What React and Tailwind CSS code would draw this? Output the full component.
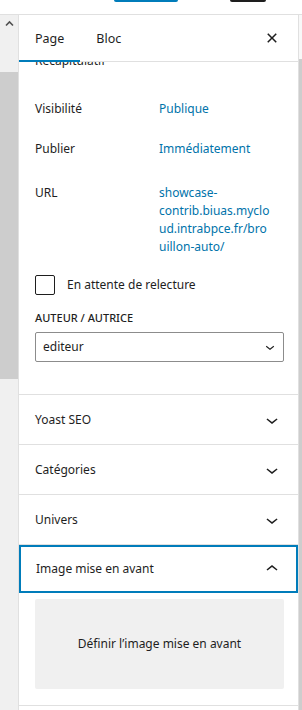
import React from "react";

const ChevronDown = ({ size = 24 }) => (
    <svg width={size} height={size} viewBox="0 0 24 24" fill="#1e1e1e">
        <path d="M17.5 11.6L12 16l-5.5-4.4.9-1.2L12 14l4.6-3.6 1 1.2z" />
    </svg>
);

const ChevronUp = ({ size = 24 }) => (
    <svg width={size} height={size} viewBox="0 0 24 24" fill="#1e1e1e">
        <path d="M6.5 12.4L12 8l5.5 4.4-.9 1.2L12 10l-4.5 3.6-1-1.2z" />
    </svg>
);

const CloseIcon = () => (
    <svg width="24" height="24" viewBox="0 0 24 24" fill="#1e1e1e">
        <path d="M12 13.06l3.712 3.713 1.061-1.06L13.061 12l3.712-3.712-1.06-1.06L12 10.938 8.288 7.227l-1.061 1.06L10.939 12l-3.712 3.712 1.06 1.061L12 13.061z" />
    </svg>
);

function Row({ label, children, className }) {
    return (
        <div className={"flex leading-[18px] " + className}>
            <div className="w-[124px] shrink-0">{label}</div>
            <div className="text-[#0073aa]">{children}</div>
        </div>
    );
}

function Panel({ title }) {
    return (
        <div className="h-[50px] flex items-center justify-between pl-4 pr-[14px] border-b border-[#e0e0e0]">
            <span>{title}</span>
            <ChevronDown />
        </div>
    );
}

export default function App() {
    return (
        <div className="w-[302px] h-[710px] overflow-hidden bg-white flex flex-col font-['Noto_Sans',sans-serif] text-[12px] text-[#1e1e1e]">
            {/* top toolbar edge */}
            <div className="h-[15px] shrink-0 flex items-start border-b border-[#e0e0e0]">
                <div className="ml-[114px] w-[64px] h-[2px] bg-[#007cba] rounded-b-[2px]"></div>
                <div className="ml-[52px] w-[36px] h-[2px] bg-[#1e1e1e] rounded-b-[2px]"></div>
            </div>

            <div className="flex flex-1 min-h-0">
                {/* left scrollbar */}
                <div className="w-[18px] shrink-0 bg-[#f0f0f0] flex flex-col">
                    <div className="h-[57px] flex justify-center pt-[5px]">
                        <svg width="9" height="7" viewBox="0 0 9 7">
                            <polyline points="1,5.5 4.5,2 8,5.5" fill="none" stroke="#505050" strokeWidth="1.6" />
                        </svg>
                    </div>
                    <div className="h-[307px] bg-[#cdcdcd]"></div>
                </div>

                {/* sidebar */}
                <div className="w-[280px] shrink-0 border-l border-[#e0e0e0] flex flex-col">
                    {/* tabs */}
                    <div className="h-[47px] shrink-0 flex items-stretch border-b border-[#e0e0e0]">
                        <div className="relative px-4 flex items-center pt-[2px] text-[12.5px]">
                            Page
                            <div className="absolute left-0 right-0 -bottom-px h-[2px] bg-[#007cba]"></div>
                        </div>
                        <div className="px-4 flex items-center pt-[2px] text-[12.5px]">Bloc</div>
                        <div className="ml-auto mr-[14px] flex items-center">
                            <CloseIcon />
                        </div>
                    </div>

                    {/* content */}
                    <div className="flex-1 min-h-0 overflow-hidden">
                        <div className="pl-4 pr-[14px] pb-[32px] border-b border-[#e0e0e0]">
                            <div className="-mt-[10px] leading-[18px]">Récapitulatif</div>
                            <Row label="Visibilité" className="mt-[30px]">Publique</Row>
                            <Row label="Publier" className="mt-[22px]">Immédiatement</Row>
                            <Row label="URL" className="mt-[26px]">
                                <div className="leading-[18px]">
                                    <div>showcase-</div>
                                    <div>contrib.biuas.myclo</div>
                                    <div>ud.intrabpce.fr/bro</div>
                                    <div>uillon-auto/</div>
                                </div>
                            </Row>
                            <div className="mt-[19px] flex items-center gap-3">
                                <div className="w-[20px] h-[20px] border border-[#1e1e1e] rounded-[2px] bg-white"></div>
                                <span>En attente de relecture</span>
                            </div>
                            <div className="mt-[15px] text-[11px] leading-[15px] uppercase font-medium">Auteur / Autrice</div>
                            <div className="mt-[7px] h-[30px] border border-[#8c8c8c] rounded-[2px] flex items-center justify-between pl-[7px] pr-[4px]">
                                <span>editeur</span>
                                <ChevronDown size={18} />
                            </div>
                        </div>

                        <Panel title="Yoast SEO" />
                        <Panel title="Catégories" />
                        <Panel title="Univers" />

                        <div className="pb-4 border-b border-[#e0e0e0]">
                            <div className="h-[48px] flex items-center justify-between pl-[15px] pr-[12px] border-2 border-[#007cba]">
                                <span>Image mise en avant</span>
                                <ChevronUp />
                            </div>
                            <div className="mt-[6px] ml-4 mr-[14px] h-[90px] bg-[#f0f0f0] rounded-[2px] flex items-center justify-center">
                                Définir l’image mise en avant
                            </div>
                        </div>
                    </div>
                </div>

                {/* right scrollbar */}
                <div className="w-[4px] shrink-0 border-l border-[#e0e0e0] flex flex-col">
                    <div className="h-[44px] bg-[#f8f8f8]"></div>
                    <div className="flex-1 bg-[#cdcdcd]"></div>
                </div>
            </div>
        </div>
    );
}
